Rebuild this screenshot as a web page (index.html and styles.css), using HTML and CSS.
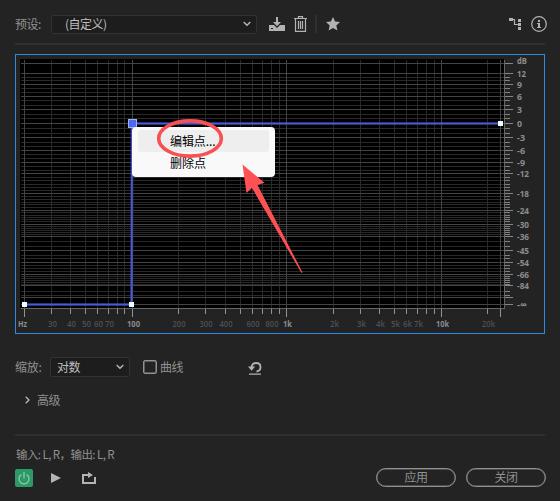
FILE: index.html
```html
<!DOCTYPE html>
<html lang="zh-CN">
<head>
<meta charset="utf-8">
<title>FFT</title>
<link rel="stylesheet" href="styles.css">
</head>
<body>
<main class="window">
  <header class="toolbar">
    <label class="label preset-label">预设:</label>
    <div class="select preset"><span>(自定义)</span><svg class="chevron" width="8" height="6"><path d="M.7 1 4 4.3 7.3 1"/></svg></div>
    <svg class="icon save" width="16" height="14"><path d="M7 0h2v5h3L8 9.3 4 5h3zM0 8h5l3 3 3-3h5v6H0z"/><path class="cut" d="M2 11h2v1H2z"/></svg>
    <svg class="icon trash" width="13" height="16"><path class="stroke" d="M0 2.5h13M4.5 2V.7h4V2M1.5 3v12.3h10V3M4.5 5v8M6.5 5v8M8.5 5v8"/></svg>
    <i class="split"></i>
    <svg class="icon star" width="14" height="14"><path d="m7 0 2.1 4.6 4.9.5-3.7 3.3 1.1 5.1L7 11l-4.4 2.5 1.1-5.1L0 5.1l4.9-.5z"/></svg>
    <svg class="icon route" width="12" height="12"><path d="M0 0h4v3H0zM9 1h3v3H9zM9 5h3v3H9zM9 9h3v3H9z"/><path class="stroke" d="M4 1.5h1.5v5H9"/></svg>
    <svg class="icon info" width="16" height="16"><circle class="stroke" cx="8" cy="8" r="7.3"/><path d="M7 4h2v2H7zM6 7h3v4h1v1H6v-1h1V8H6z"/></svg>
  </header>

  <section class="graph">
    <svg id="chart" width="528" height="278" viewBox="16 55 528 278">
      <rect x="20" y="59" width="484" height="249" fill="#000"/>
      <g id="grid" shape-rendering="crispEdges"></g>
      <g id="labels"></g>
      <path class="halo" d="M24 304.5H131.5L132 123.5H500"/>
      <path class="curve" d="M24 304.5H131.5L132 123.5H500"/>
      <path class="point" d="M22 302h5v5h-5zM129 302h5v5h-5zM498 121h5v5h-5z"/>
      <rect x="128.5" y="119.5" width="8" height="8" fill="#4967ff" stroke="#a3b5d2"/>
    </svg>
    <div class="menu">
      <div class="item active">编辑点...</div>
      <div class="item">删除点</div>
    </div>
    <svg class="marks" width="180" height="160" viewBox="125 115 180 160">
      <ellipse cx="190" cy="138.5" rx="31.3" ry="17.6"/>
      <path d="m242.5 164.5 22 18.2-7 2.3L302.5 272.5l-1 .5L252 188l-5.500 5z"/>
    </svg>
  </section>

  <section class="options">
    <label class="label scale-label">缩放:</label>
    <div class="select scale"><span>对数</span><svg class="chevron" width="8" height="6"><path d="M.7 1 4 4.3 7.3 1"/></svg></div>
    <i class="check"></i><span class="label curve-label">曲线</span>
    <svg class="icon reset" width="14" height="13"><path class="arc" d="M3.5 5C4 2.5 5.800 1 8 1c2.700 0 4.500 1.700 4.500 4.200S11 9 8.500 9.500"/><path d="M0 4.500h7.200L3.500 8.700zM1 11.500h12v1.200H1z"/></svg>
  </section>
  <section class="advanced"><svg class="chevron" width="5" height="8"><path d="M.7.7 4 4 .7 7.300"/></svg><span>高级</span></section>

  <footer class="footer">
    <div class="io">输入: L, R，输出: L, R</div>
    <div class="actions">
      <div class="power"><svg width="12" height="13"><path d="M3.500 2.500a5 5 0 1 0 5 0M6 0v6.500"/></svg></div>
      <svg class="icon play" width="10" height="10"><path d="M0 0 10 5 0 10z"/></svg>
      <svg class="icon loop" width="14" height="12"><path d="M0 2h6V0l5 3-5 3V4H2v6h10V5h2v7H0z"/></svg>
      <button class="button apply">应用</button>
      <button class="button">关闭</button>
    </div>
  </footer>
</main>
<script src="chart.js"></script>
</body>
</html>
```
FILE: styles.css
```css
* { box-sizing: border-box; }
body {
  margin: 0;
  background: #232323;
  color: #919191;
  font: 12px/16px "Noto Sans CJK SC", sans-serif;
}
svg { display: block; flex: none; }
.window { width: 560px; height: 501px; padding: 0 14px 0 15px; overflow: hidden; }
.toolbar { display: flex; align-items: center; width: 530px; height: 45px; padding-top: 5px; border-bottom: 2px solid #303030; }
.label { color: #919191; font-size: 12px; }
.preset-label { width: 36px; letter-spacing: -.5px; }
.select {
  display: flex;
  align-items: center;
  justify-content: space-between;
  height: 19px;
  padding: 0 5px 0 13px;
  border: 1px solid #323232;
  border-radius: 2px;
  background: #1d1d1d;
  color: #bdbdbd;
}
.preset { width: 206px; letter-spacing: -.5px; }
.chevron { fill: none; stroke: #b8b8b8; stroke-width: 1.3; }
.icon { fill: #b3b3b3; }
.icon .stroke { fill: none; stroke: #b3b3b3; stroke-width: 1.2; }
.icon .arc { fill: none; stroke: #b3b3b3; stroke-width: 1.8; }
.icon .cut { fill: #232323; }
.save { margin-left: 12px; }
.trash { margin-left: 9px; }
.split { width: 2px; height: 18px; margin-left: 8px; background: #303030; }
.star { margin-left: 9px; }
.route { margin-left: auto; }
.info { margin: 0 -2px 0 10px; }
.graph { position: relative; width: 530px; height: 280px; margin-top: 9px; border: 1px solid #2d88e6; }
.halo { fill: none; stroke: #3e50be; stroke-width: 3; opacity: .5; }
.curve { fill: none; stroke: #485bde; stroke-width: 1.4; }
.point { fill: #eff; }
.axis { font: 700 9px "Open Sans", sans-serif; fill: #8c8c8c; }
.axis.dim { font-weight: 600; fill: #505050; }
.menu {
  position: absolute;
  left: 116px;
  top: 72px;
  width: 143px;
  height: 50px;
  padding: 3px 6px;
  border-radius: 4px;
  background: #f9f9f9;
  color: #000;
}
.item { height: 22px; padding-left: 32px; line-height: 21px; border-radius: 3px; }
.item.active { background: #eee; letter-spacing: -.1px; }
.marks { position: absolute; left: 109px; top: 60px; }
.marks ellipse { fill: none; stroke: #f85053; stroke-width: 3.6; }
.marks path { fill: #ff5053; }
.options { display: flex; align-items: center; height: 20px; margin-top: 23px; }
.scale-label { width: 35px; letter-spacing: -.3px; }
.scale { width: 80px; height: 20px; padding-left: 6px; letter-spacing: -.5px; }
.check { width: 14px; height: 14px; margin: 0 3px 0 13px; border: 1px solid #929292; border-radius: 2px; box-shadow: inset 0 0 0 .5px #929292; }
.curve-label { letter-spacing: -.5px; }
.reset { margin: 2px 0 0 65px; }
.advanced { display: flex; align-items: center; gap: 7px; height: 16px; margin-top: 15px; padding-left: 10px; letter-spacing: -.5px; }
.footer { width: 530px; height: 66px; margin-top: 26px; border-top: 2px solid #303030; }
.io { height: 16px; margin-top: 10px; padding-left: 1px; font-size: 11.5px; letter-spacing: -.57px; white-space: nowrap; }
.actions { display: flex; align-items: center; width: 531px; height: 18px; margin-top: 7px; }
.power { display: grid; place-items: center; width: 18px; height: 18px; border-radius: 2px; background: #2c9a66; }
.power svg { fill: none; stroke: #9bc9b1; stroke-width: 1.2; }
.play { margin-left: 18px; }
.loop { margin-left: 21px; }
.button {
  width: 80px;
  height: 19px;
  margin: -2px 0 0 10px;
  padding: 0;
  border: 1px solid #929292;
  border-radius: 10px;
  background: transparent;
  box-shadow: inset 0 0 0 .5px #777;
  color: #919191;
  font: 12px/16px "Noto Sans CJK SC", sans-serif;
  letter-spacing: -.5px;
}
.apply { margin-left: auto; }
```
FILE: chart.js
```js
const NS = "http://www.w3.org/2000/svg";
const grid = document.getElementById("grid");
const labels = document.getElementById("labels");

function rect(x, y, width, height, fill) {
  const node = document.createElementNS(NS, "rect");
  for (const [key, value] of Object.entries({ x, y, width, height, fill })) node.setAttribute(key, value);
  grid.appendChild(node);
}
function text(x, y, value, dim, length) {
  const node = document.createElementNS(NS, "text");
  node.setAttribute("x", x);
  node.setAttribute("y", y);
  node.setAttribute("class", dim ? "axis dim" : "axis");
  node.setAttribute("textLength", length);
  node.setAttribute("lengthAdjust", "spacingAndGlyphs");
  node.textContent = value;
  labels.appendChild(node);
}

const minorX = [51,70,85,97,108,117,124,178,205,225,240,252,262,271,279,333,360,379,394,406,417,426,434,487];
const majorX = [24,132,286,441,500];
const minorY = [77,80,88,92,100,105,114,118,128,133,142,146,154,158,166,170,177,180,184,187,190,196,199,202,204,207,212,215,217,219,221,226,228,230,232,234,241,246,255,258,265,268,271,276,278,280,282,284,291,295];
const majorY = [63,73,84,96,109,123,137,150,162,173,193,210,224,236,250,262,274,285,297,304];

minorY.forEach(y => { rect(21, y, 483, 1, "#292929"); rect(504, y, 6, 1, "#808080"); });
minorX.forEach(x => { rect(x, 60, 1, 248, "#292929"); rect(x, 309, 1, 5, "#929292"); });
majorY.forEach(y => { rect(21, y, 483, 1, "#444"); rect(504, y, 9, 1, "#858585"); });
majorX.forEach(x => { rect(x, 60, 1, 248, "#444"); rect(x, 309, 1, 8, "#929292"); });
rect(21, 308, 484, 1, "#656565");
rect(504, 60, 1, 249, "#656565");

[["dB",64,10],["12",77,9],["9",88,5],["6",100,5],["3",113,5],["0",127,5],["-3",141,8],["-6",154,8],["-9",166,8],["-12",177,12],["-18",197,12],["-24",214,12],["-30",228,12],["-36",240,12],["-45",254,12],["-54",266,12],["-66",278,12],["-84",289,12],["-∞",308,10]]
  .forEach(([value, y, length]) => text(517, y, value, false, length));
[["Hz",18,9],["100",127,13],["1k",283,9],["10k",436,13]].forEach(([v,x,w]) => text(x,327,v,false,w));
[["30",48],["40",67],["50",82],["60",94],["70",105],["2k",330],["3k",357],["4k",376],["5k",391],["6k",403],["7k",414]]
  .forEach(([v,x]) => text(x,327,v,true,9));
[["200",172.5],["300",199.5],["400",219.5],["600",246.5],["800",265.5],["20k",482]].forEach(([v,x]) => text(x,327,v,true,13));
```
